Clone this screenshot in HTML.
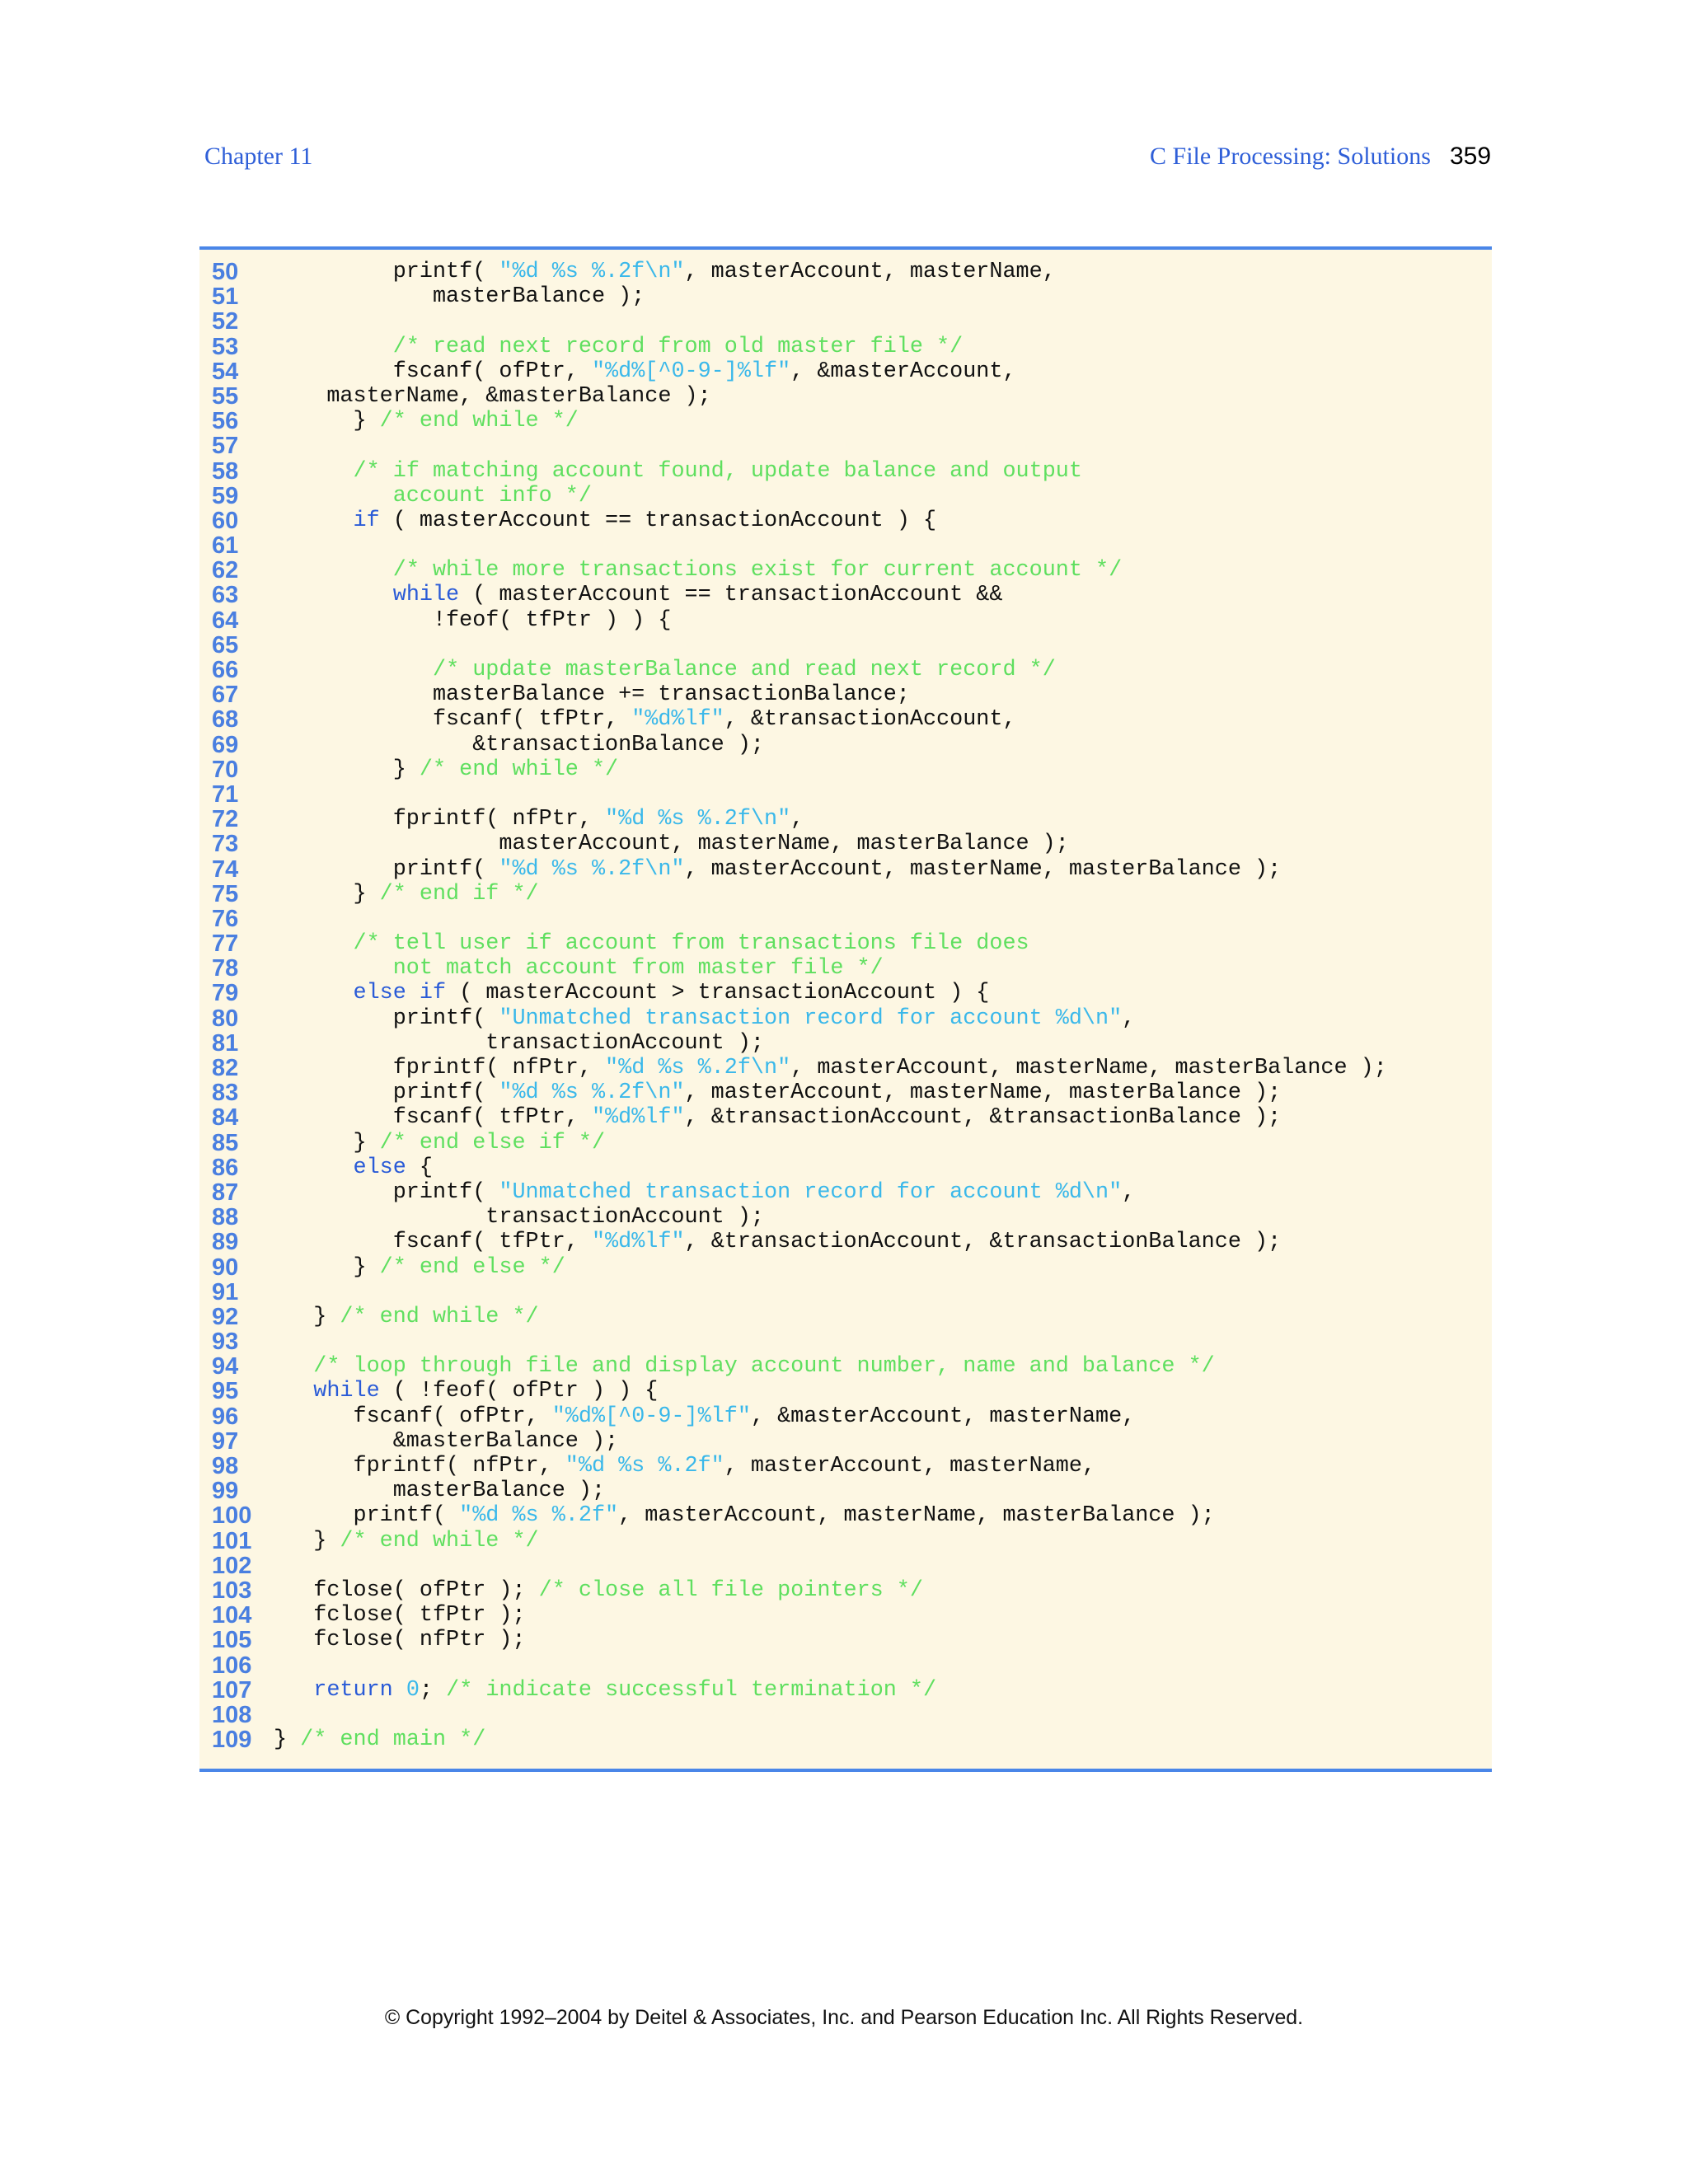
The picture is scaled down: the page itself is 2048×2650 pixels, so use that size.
<!DOCTYPE html>
<html><head><meta charset="utf-8"><style>
html,body{margin:0;padding:0;background:#fff;}
body{width:2048px;height:2650px;position:relative;overflow:hidden;}
.hdr{position:absolute;top:170px;font-family:"Liberation Serif",serif;font-size:30px;color:#2f5fd8;line-height:40px;}
.pg{position:absolute;top:170px;left:1759px;font-family:"Liberation Sans",sans-serif;font-size:30px;color:#000;line-height:40px;}
.box{position:absolute;left:242px;top:299px;width:1568px;height:1843px;background:#fdf7e3;border-top:4px solid #4a86e8;border-bottom:4px solid #4a86e8;}
pre{margin:0;position:absolute;top:315px;line-height:30.19px;}
.ln{left:257px;font-family:"Liberation Sans",sans-serif;font-weight:bold;font-size:29px;color:#4a7fe0;}
.code{left:332px;font-family:"Liberation Mono",monospace;font-size:26.8px;color:#111;}
.k{color:#2a5bd7}.s{color:#3ab8ea}.c{color:#5fdf5f}
.ft{position:absolute;top:2434px;left:0;width:2048px;text-align:center;font-family:"Liberation Sans",sans-serif;font-size:24.9px;color:#111;}
</style></head><body>
<div class="hdr" style="left:248px">Chapter 11</div>
<div class="hdr" style="left:1395px">C File Processing: Solutions</div>
<div class="pg">359</div>
<div class="box"></div>
<pre class="ln">50
51
52
53
54
55
56
57
58
59
60
61
62
63
64
65
66
67
68
69
70
71
72
73
74
75
76
77
78
79
80
81
82
83
84
85
86
87
88
89
90
91
92
93
94
95
96
97
98
99
100
101
102
103
104
105
106
107
108
109</pre>
<pre class="code">         printf( <span class="s">"%d %s %.2f\n"</span>, masterAccount, masterName,
            masterBalance );

         <span class="c">/* read next record from old master file */</span>
         fscanf( ofPtr, <span class="s">"%d%[^0-9-]%lf"</span>, &amp;masterAccount,
    masterName, &amp;masterBalance );
      } <span class="c">/* end while */</span>

      <span class="c">/* if matching account found, update balance and output
         account info */</span>
      <span class="k">if</span> ( masterAccount == transactionAccount ) {

         <span class="c">/* while more transactions exist for current account */</span>
         <span class="k">while</span> ( masterAccount == transactionAccount &amp;&amp;
            !feof( tfPtr ) ) {

            <span class="c">/* update masterBalance and read next record */</span>
            masterBalance += transactionBalance;
            fscanf( tfPtr, <span class="s">"%d%lf"</span>, &amp;transactionAccount,
               &amp;transactionBalance );
         } <span class="c">/* end while */</span>

         fprintf( nfPtr, <span class="s">"%d %s %.2f\n"</span>,
                 masterAccount, masterName, masterBalance );
         printf( <span class="s">"%d %s %.2f\n"</span>, masterAccount, masterName, masterBalance );
      } <span class="c">/* end if */</span>

      <span class="c">/* tell user if account from transactions file does
         not match account from master file */</span>
      <span class="k">else if</span> ( masterAccount &gt; transactionAccount ) {
         printf( <span class="s">"Unmatched transaction record for account %d\n"</span>,
                transactionAccount );
         fprintf( nfPtr, <span class="s">"%d %s %.2f\n"</span>, masterAccount, masterName, masterBalance );
         printf( <span class="s">"%d %s %.2f\n"</span>, masterAccount, masterName, masterBalance );
         fscanf( tfPtr, <span class="s">"%d%lf"</span>, &amp;transactionAccount, &amp;transactionBalance );
      } <span class="c">/* end else if */</span>
      <span class="k">else</span> {
         printf( <span class="s">"Unmatched transaction record for account %d\n"</span>,
                transactionAccount );
         fscanf( tfPtr, <span class="s">"%d%lf"</span>, &amp;transactionAccount, &amp;transactionBalance );
      } <span class="c">/* end else */</span>

   } <span class="c">/* end while */</span>

   <span class="c">/* loop through file and display account number, name and balance */</span>
   <span class="k">while</span> ( !feof( ofPtr ) ) {
      fscanf( ofPtr, <span class="s">"%d%[^0-9-]%lf"</span>, &amp;masterAccount, masterName,
         &amp;masterBalance );
      fprintf( nfPtr, <span class="s">"%d %s %.2f"</span>, masterAccount, masterName,
         masterBalance );
      printf( <span class="s">"%d %s %.2f"</span>, masterAccount, masterName, masterBalance );
   } <span class="c">/* end while */</span>

   fclose( ofPtr ); <span class="c">/* close all file pointers */</span>
   fclose( tfPtr );
   fclose( nfPtr );

   <span class="k">return</span> <span class="s">0</span>; <span class="c">/* indicate successful termination */</span>

} <span class="c">/* end main */</span></pre>
<div class="ft">© Copyright 1992–2004 by Deitel &amp; Associates, Inc. and Pearson Education Inc. All Rights Reserved.</div>
</body></html>
